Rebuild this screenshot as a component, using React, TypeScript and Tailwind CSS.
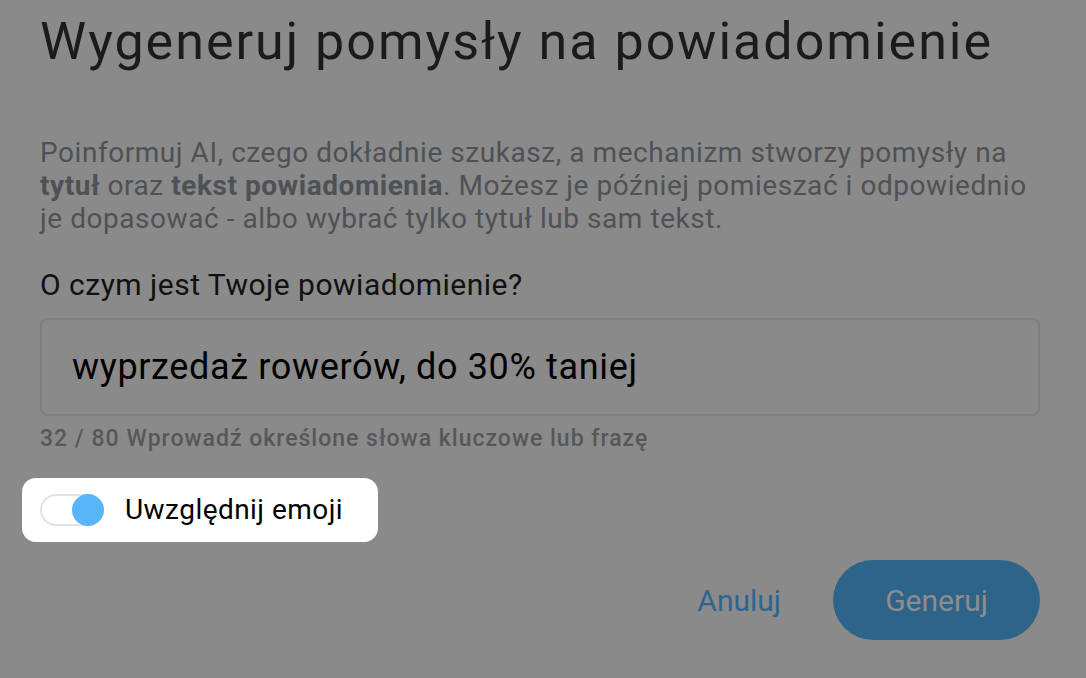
import React from "react";

function Toggle() {
  return (
    <div className="relative h-[32px] w-[64px]">
      <div className="absolute inset-y-0 left-0 right-[2px] rounded-full border-2 border-[#e2e2e2] bg-white" />
      <div className="absolute right-0 top-0 h-[32px] w-[32px] rounded-full bg-[#57b5f8]" />
    </div>
  );
}

export default function App() {
  return (
    <div
      className="h-[678px] w-[1086px] overflow-hidden bg-[#8a8a8a]"
      style={{ fontFamily: "Roboto, 'Noto Sans', sans-serif" }}
    >
      <div className="px-[40px] pt-[16px]">
        <h1 className="text-[52px] leading-[52px] tracking-[2px] text-[#1b1b1b]">
          Wygeneruj pomysły na powiadomienie
        </h1>

        <p className="mt-[68px] text-[28px] leading-[33px] tracking-[0.55px] text-[#4e5155]">
          Poinformuj AI, czego dokładnie szukasz, a mechanizm stworzy pomysły na
          <br />
          <b className="font-bold">tytuł</b> oraz{" "}
          <b className="font-bold">tekst powiadomienia</b>. Możesz je później
          pomieszać i odpowiednio
          <br />
          je dopasować - albo wybrać tylko tytuł lub sam tekst.
        </p>

        <label className="mt-[33px] block text-[30px] leading-[34px] tracking-[0.5px] text-[#111111]">
          O czym jest Twoje powiadomienie?
        </label>

        <div className="mt-[16px] flex h-[98px] w-[1000px] items-center rounded-[7px] border-2 border-[#7e7e7e] px-[30px]">
          <span className="text-[36px] tracking-[0.65px] text-black">
            wyprzedaż rowerów, do 30% taniej
          </span>
        </div>
        <div className="mt-[10px] text-[23px] font-medium leading-[26px] tracking-[1px] text-[#55585b]">
          32 / 80 Wprowadź określone słowa kluczowe lub frazę
        </div>

        <div className="-ml-[18px] mt-[26px] flex h-[64px] w-[356px] items-center gap-[21px] rounded-[14px] bg-white pl-[18px]">
          <Toggle />
          <span className="text-[28px] tracking-[0.45px] text-black">
            Uwzględnij emoji
          </span>
        </div>

        <div className="mt-[18px] flex items-center justify-end gap-[52px] pr-[6px]">
          <button className="text-[30px] text-[#2e6590]">Anuluj</button>
          <button className="h-[80px] w-[207px] rounded-full bg-[#2e6489] text-[30px] text-[#8d8d8d]">
            Generuj
          </button>
        </div>
      </div>
    </div>
  );
}
